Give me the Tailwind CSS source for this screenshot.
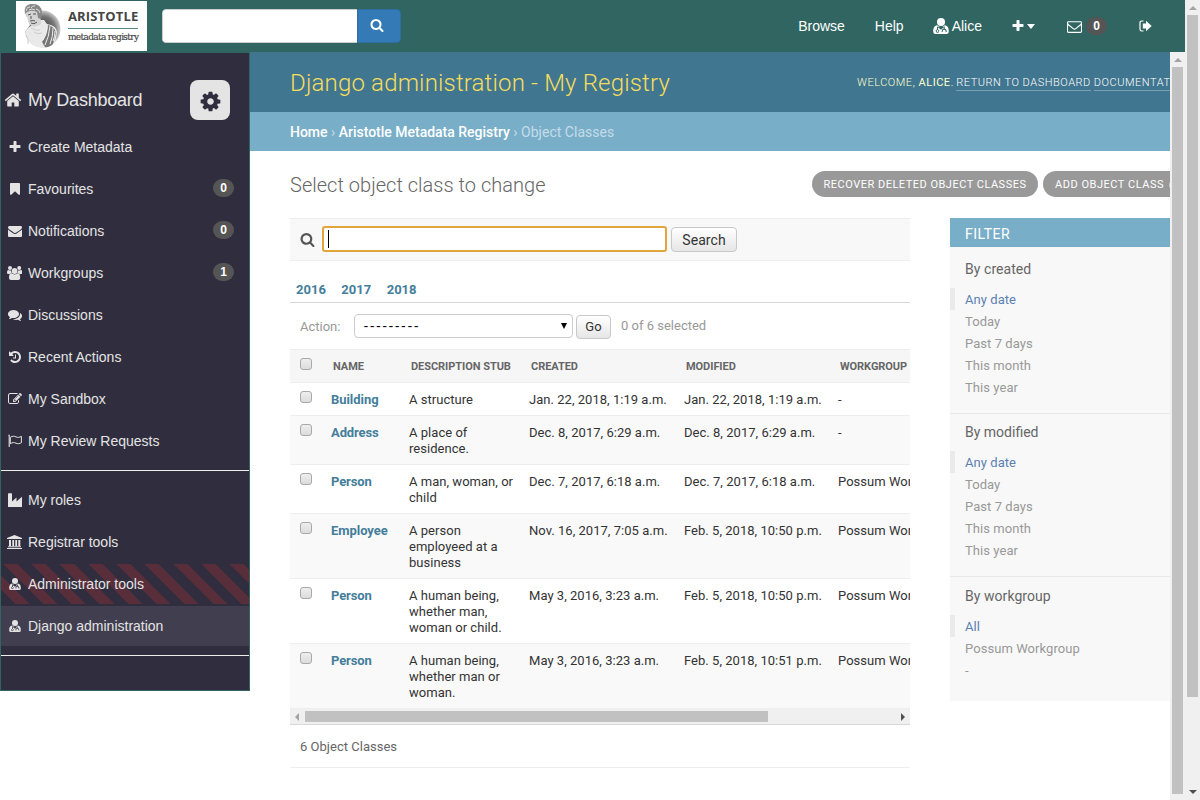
<!DOCTYPE html>
<html lang="en">
<head>
<meta charset="utf-8">
<title>Select object class to change</title>
<script src="https://cdn.jsdelivr.net/npm/@tailwindcss/browser@4"></script>
</head>
<body class="h-[800px] w-[1200px] overflow-hidden bg-white font-['Liberation_Sans',Arial,sans-serif] text-sm">
<svg class="hidden">
  <symbol id="plus" viewBox="0 0 1792 1792"><path d="M1600 736v192q0 40-28 68t-68 28h-416v416q0 40-28 68t-68 28h-192q-40 0-68-28t-28-68v-416h-416q-40 0-68-28t-28-68v-192q0-40 28-68t68-28h416v-416q0-40 28-68t68-28h192q40 0 68 28t28 68v416h416q40 0 68 28t28 68z"/></symbol>
  <symbol id="bookmark" viewBox="0 0 1792 1792"><path d="M1420 128q23 0 44 9 33 13 52.500 41t19.500 62v1289q0 34-19.500 62t-52.500 41q-19 8-44 8-48 0-83-32l-441-424-441 424q-36 33-83 33-23 0-44-9-33-13-52.500-41t-19.500-62v-1289q0-34 19.500-62t52.500-41q21-9 44-9h1048z"/></symbol>
  <symbol id="envelope" viewBox="0 0 1792 1792"><path d="M1792 710v794q0 66-47 113t-113 47h-1472q-66 0-113-47t-47-113v-794q44 49 101 87 362 246 497 345 57 42 92.500 65.500t94.500 48 110 24.500h2q51 0 110-24.500t94.500-48 92.500-65.500q170-123 498-345 57-39 100-87zm0-294q0 79-49 151t-122 123q-376 261-468 325-10 7-42.500 30.500t-54 38-52 32.500-57.500 27-50 9h-2q-23 0-50-9t-57.500-27-52-32.500-54-38-42.500-30.500q-91-64-262-182.500t-205-142.500q-62-42-117-115.500t-55-136.500q0-78 41.500-130t118.500-52h1472q65 0 112.500 47t47.500 113z"/></symbol>
  <symbol id="envelope-o" viewBox="0 0 1792 1792"><path d="M1664 1504v-768q-32 36-69 66-268 206-426 338-51 43-83 67t-86.500 48.500-102.500 24.500h-2q-48 0-102.500-24.500t-86.500-48.500-83-67q-158-132-426-338-37-30-69-66v768q0 13 9.500 22.500t22.500 9.500h1472q13 0 22.500-9.500t9.500-22.500zm0-1051v-24.500l-.5-13-3-12.500-5.500-9-9-7.500-14-2.500h-1472q-13 0-22.500 9.500t-9.500 22.500q0 168 147 284 193 152 401 317 6 5 35 29.500t46 37.500 44.500 31.500 50.500 27.500 43 9h2q20 0 43-9t50.500-27.500 44.500-31.500 46-37.500 35-29.500q208-165 401-317 54-43 100.500-115.500t46.500-131.500zm128-37v1088q0 66-47 113t-113 47h-1472q-66 0-113-47t-47-113v-1088q0-66 47-113t113-47h1472q66 0 113 47t47 113z"/></symbol>
  <symbol id="cog" viewBox="0 0 1792 1792"><path d="M1152 896q0-106-75-181t-181-75-181 75-75 181 75 181 181 75 181-75 75-181zm512-109v222q0 12-8 23t-20 13l-185 28q-19 54-39 91 35 50 107 138 10 12 10 25t-9 23q-27 37-99 108t-94 71q-12 0-26-9l-138-108q-44 23-91 38-16 136-29 186-7 28-36 28h-222q-14 0-24.500-8.500t-11.500-21.500l-28-184q-49-16-90-37l-141 107q-10 9-25 9-14 0-25-11-126-114-165-168-7-10-7-23 0-12 8-23 15-21 51-66.500t54-70.500q-27-50-41-99l-183-27q-13-2-21-12.500t-8-23.500v-222q0-12 8-23t19-13l186-28q14-46 39-92-40-57-107-138-10-12-10-24 0-10 9-23 26-36 98.500-107.500t94.500-71.500q13 0 26 10l138 107q44-23 91-38 16-136 29-186 7-28 36-28h222q14 0 24.500 8.500t11.500 21.500l28 184q49 16 90 37l142-107q9-9 24-9 13 0 25 10 129 119 165 170 7 8 7 22 0 12-8 23-15 21-51 66.500t-54 70.500q26 50 41 98l183 28q13 2 21 12.500t8 23.500z"/></symbol>
  <symbol id="home" viewBox="0 0 1792 1792"><path d="M1472 992v480q0 26-19 45t-45 19h-384v-384h-256v384h-384q-26 0-45-19t-19-45v-480q0-1 .5-3t.5-3l575-474 575 474q1 2 1 6zm223-69l-62 74q-8 9-21 11h-3q-13 0-21-7l-692-577-692 577q-12 8-24 7-13-2-21-11l-62-74q-8-10-7-23.500t11-21.500l719-599q32-26 76-26t76 26l244 204v-195q0-14 9-23t23-9h192q14 0 23 9t9 23v408l219 182q10 8 11 21.500t-7 23.500z"/></symbol>
  <symbol id="search" viewBox="0 0 1792 1792"><path d="M1216 832q0-185-131.500-316.500t-316.500-131.500-316.500 131.500-131.500 316.500 131.500 316.500 316.500 131.500 316.500-131.500 131.500-316.500zm512 832q0 52-38 90t-90 38q-54 0-90-38l-343-342q-179 124-399 124-143 0-273.500-55.500t-225-150-150-225-55.500-273.500 55.500-273.500 150-225 225-150 273.500-55.500 273.500 55.500 225 150 150 225 55.500 273.500q0 220-124 399l343 343q37 37 37 90z"/></symbol>
  <symbol id="history" viewBox="0 0 1792 1792"><path d="M1664 896q0 156-61 298t-164 245-245 164-298 61q-172 0-327-72.500t-264-204.500q-7-10-6.500-22.500t8.500-20.500l137-138q10-9 25-9 16 2 23 12 73 95 179 147t225 52q104 0 198.500-40.500t163.500-109.500 109.500-163.500 40.500-198.500-40.500-198.500-109.500-163.500-163.500-109.500-198.500-40.500q-98 0-188 35.500t-160 101.500l137 138q31 30 14 69-17 40-59 40h-448q-26 0-45-19t-19-45v-448q0-42 40-59 39-17 69 14l130 129q107-101 244.500-156.500t284.500-55.500q156 0 298 61t245 164 164 245 61 298zm-640-288v448q0 14-9 23t-23 9h-320q-14 0-23-9t-9-23v-64q0-14 9-23t23-9h224v-352q0-14 9-23t23-9h64q14 0 23 9t9 23z"/></symbol>
  <symbol id="comments" viewBox="0 0 1792 1792"><path d="M1408 768q0 139-94 257t-256.500 186.500-353.500 68.500q-86 0-176-16-124 88-278 128-36 9-86 16h-3q-11 0-20.500-8t-11.500-21q-1-3 2-19l10-16q30-32 53-58t48-68 20-44q-124-72-195-177t-71-224q0-139 94-257t256.500-186.500 353.500-68.500 353.500 68.500 256.500 186.500 94 257zm384 256q0 120-71 224.500t-195 176.500q10 24 20.500 44t25 38.500 22.500 29 26 29.500 23 25l16 20 5 17q-3 30-36 35-50-7-86-16-154-40-278-128-90 16-176 16-271 0-472-132 58 4 88 4 161 0 309-45t264-129q125-92 192-212t67-254q0-77-23-152 129 71 204 178t75 230z"/></symbol>
  <symbol id="edit" viewBox="0 0 1792 1792"><path d="M888 1184l116-116-152-152-116 116v56h96v96h56zm440-720q-16-16-33 1l-350 350q-17 17-1 33t33-1l350-350q17-17 1-33zm80 594v190q0 119-84.500 203.500t-203.500 84.500h-832q-119 0-203.500-84.500t-84.500-203.500v-832q0-119 84.500-203.500t203.500-84.500h832q63 0 117 25 15 7 18 23 3 17-9 29l-49 49q-14 14-32 8-23-6-45-6h-832q-66 0-113 47t-47 113v832q0 66 47 113t113 47h832q66 0 113-47t47-113v-126q0-13 9-22l64-64q15-15 35-7t20 29zm-96-738l288 288-672 672h-288v-288zm444 132l-92 92-288-288 92-92q28-28 68-28t68 28l152 152q28 28 28 68t-28 68z"/></symbol>
  <symbol id="flag" viewBox="0 0 14 14"><path d="M.3 1.200h1.400M1.200 1v12" fill="none" stroke="currentColor" stroke-width="1.100"/><path d="M2.300 3.300C4.500 2 6 1.900 8 2.900c2 .9 3.300.5 5.400-.5v6.300c-2 1-3.400 1.400-5.400.5-2-1-3.500-.8-5.700.5z" fill="none" stroke="currentColor"/></symbol>
  <symbol id="industry" viewBox="0 0 14 14"><path d="M0 14V1q0-.8.800-.8h2.500q.7 0 .7.800v7.500l4.500-4v4l5.500-4.800V14z"/></symbol>
  <symbol id="bank" viewBox="0 0 15 14"><path d="M7.500 0L15 3v1H0V3zM2 5h2v6H2zm3.300 0h1.800v6H5.300zm3 0h1.800v6H8.300zM11.300 5h2v6h-2zM1 11.300h13v1H1zM0 13h15v1H0z"/></symbol>
  <symbol id="users" viewBox="0 0 15 14"><circle cx="3" cy="2" r="2"/><circle cx="12.200" cy="2" r="2"/><circle cx="7.600" cy="5" r="2.900"/><path d="M0 7.300C0 4.600.5 4 1.300 4 2 4.500 3 4.700 4 4.300 4 5.400 4.200 6.200 4.900 7 3.800 7 3.300 7.300 2.800 8H1.500Q0 8 0 7.300zM15.200 7.300C15.200 4.600 14.700 4 13.900 4c-.7.500-1.700.7-2.700.3 0 1.100-.2 1.900-.9 2.700 1.100 0 1.600.3 2.100 1h1.300q1.500 0 1.500-.7zM2 12c0-3.300.8-4.700 2.700-4.700 1.800 1.500 4 1.500 5.800 0 1.900 0 2.700 1.400 2.700 4.700q0 2-2 2H4q-2 0-2-2z"/></symbol>
  <symbol id="doctor" viewBox="0 0 16 16"><circle cx="8" cy="4" r="4"/><path fill-rule="evenodd" d="M4.200 7.300q3.800 3 7.600 0c3 .4 4 3 4 6.200q0 2.500-2.400 2.500H2.600Q.2 16 .2 13.500c0-3.200 1-5.800 4-6.200zM4 8.800v2.700a1.600 1.600 0 1 0 1 0V9.200l3 2.600 2.700-2.500v1.500c-1.500.3-2 1-2 3.200h1c0-1.500.3-2.200 1.500-2.200s1.500.7 1.500 2.200h1c0-2.200-.5-2.900-2-3.200V8.600zM3.800 13a.8.8 0 1 1 1.500 0 .8.800 0 1 1-1.500 0z"/></symbol>
  <symbol id="signout" viewBox="0 0 13 12"><path d="M4.500 1H2.700Q1 1 1 2.700v6.600Q1 11 2.700 11h1.800" fill="none" stroke="currentColor" stroke-width="1.200"/><path d="M7 .8L12.700 6 7 11.200V8.500H3.800v-5H7z"/></symbol>
</svg>

<div class="flex h-full">
<div class="flex w-[1185px] flex-col">
  <header class="flex h-[52px] shrink-0 items-center bg-[#306561] text-white">
    <div class="ml-4 flex h-[50px] w-[131px] items-center bg-white">
      <svg class="ml-1.5 h-[46px] w-10" viewBox="0 0 40 46">
        <defs><radialGradient id="halo"><stop offset="0" stop-color="#333"/><stop offset=".7" stop-color="#777"/><stop offset="1" stop-color="#ccc"/></radialGradient></defs>
        <ellipse cx="20.500" cy="26" rx="18" ry="18.500" fill="url(#halo)"/>
        <path d="M0 0h7l-3 12 4 10-6 8H0z" fill="#fff"/>
        <path d="M3 31q1-7 9-9l1-5 9 0 3 4q9 1 10 8l-2 11q-5 5-13 5-8-1-12-5z" fill="#e9e9e9"/>
        <path d="M26 22q7 2 8 8l-3 11q-5 4-8 3l-3-5q6-8 6-17z" fill="#777"/>
        <path d="M28 23q-1 11-5 19M31 25q0 9-3 16M33 28q0 6-2 10M25 24q-1 8-4 13" fill="none" stroke="#eee" stroke-width="1"/>
        <path d="M4 32q3 5 2 9M9 25q5 3 9 2M12 29q4 3 8 1" fill="none" stroke="#ccc"/>
        <path d="M3 9Q4 1 11 1q8 0 8 8l-1 5q2 6 0 8l-6 2q-6-2-6-8Q3 13 3 9z" fill="#d4d4d4"/>
        <path d="M3 11Q1 2 9 1q10-1 11 8l-1 7-3-1-1-6q-5-2-7-1l-3 1z" fill="#888"/>
        <path d="M4 8q1-5 4-4M9 5q1-3 4-2M14 6q3 0 4 4M7 7q3-2 6 0" fill="none" stroke="#ddd"/>
        <path d="M6 12l3-1M11 11l3 0M9 13l0 3M8 18q3-1 5 0M9 20q3 2 6-1" fill="none" stroke="#444" stroke-width=".9"/>
      </svg>
      <div class="ml-1.5 flex w-[70px] flex-col whitespace-nowrap text-[#444]">
        <div class="font-['Open_Sans',sans-serif] text-[13px] leading-[15px] font-bold tracking-[0.15px]">ARISTOTLE</div>
        <div class="mt-1 h-px bg-[#528b83]"></div>
        <div class="mt-[2px] font-['DejaVu_Serif',serif] text-[9px] leading-3 tracking-[-0.67px] [-webkit-text-stroke:0.2px_#444]">metadata registry</div>
      </div>
    </div>
    <div class="ml-[15px] flex h-[34px] w-[239px] overflow-hidden rounded">
      <div class="w-[195px] rounded-l border border-r-0 border-[#ccc] bg-white"></div>
      <div class="grid flex-1 place-items-center rounded-r border border-[#2e6da4] bg-[#337ab7]"><svg class="mr-[5px] mb-[3px] size-3.5 fill-white"><use href="#search"/></svg></div>
    </div>
    <nav class="ml-auto flex items-center pr-[33px] text-sm">
      <span>Browse</span><span class="ml-[30px]">Help</span>
      <svg class="ml-[29.5px] size-4 fill-white"><use href="#doctor"/></svg><span class="ml-[2.5px]">Alice</span>
      <svg class="ml-[29px] size-3.5 fill-white"><use href="#plus"/></svg>
      <span class="ml-[2px] h-0 w-0 border-x-[4.5px] border-t-[5px] border-x-transparent border-t-white"></span>
      <svg class="ml-8 size-[15px] fill-white"><use href="#envelope-o"/></svg>
      <span class="ml-1 grid h-[18px] w-[21px] place-items-center rounded-full bg-[#555] text-xs font-bold">0</span>
      <svg class="ml-8 h-3 w-[13px] fill-white"><use href="#signout"/></svg>
    </nav>
  </header>

  <div class="flex min-h-0 flex-1">
    <aside class="flex h-[639px] w-[250px] shrink-0 flex-col border border-[#306561] bg-[#302e3e] text-[#e4e4e4]">
      <div class="mt-[27px] flex h-10 items-center text-lg">
        <svg class="ml-[3px] size-[18px] fill-current"><use href="#home"/></svg><span class="ml-1.5 tracking-[-0.22px]">My Dashboard</span>
        <span class="mr-[19px] ml-auto grid size-10 place-items-center rounded-lg bg-[#e4e4e4] text-[#302e3e]"><svg class="mt-0.5 size-[23px] fill-current"><use href="#cog"/></svg></span>
      </div>
      <div class="mt-[7px] flex flex-col gap-0.5">
        <div class="flex h-10 items-center pl-1.5"><svg class="mr-[7px] ml-px size-3.5 fill-current"><use href="#plus"/></svg><span class="-ml-px">Create Metadata</span></div>
        <div class="flex h-10 items-center pl-[7px]"><svg class="mr-1.5 size-3.5 fill-current"><use href="#bookmark"/></svg>Favourites<span class="mr-[15px] mb-0.5 ml-auto grid h-[18px] w-[21px] place-items-center rounded-full bg-[#555] text-xs font-bold text-white">0</span></div>
        <div class="flex h-10 items-center pl-[7px]"><svg class="mr-1.5 size-3.5 fill-current"><use href="#envelope"/></svg>Notifications<span class="mr-[15px] mb-0.5 ml-auto grid h-[18px] w-[21px] place-items-center rounded-full bg-[#555] text-xs font-bold text-white">0</span></div>
        <div class="flex h-10 items-center pl-1.5"><svg class="mr-1.5 h-3.5 w-[15px] fill-current"><use href="#users"/></svg>Workgroups<span class="mr-[15px] mb-0.5 ml-auto grid h-[18px] w-[21px] place-items-center rounded-full bg-[#555] text-xs font-bold text-white">1</span></div>
        <div class="flex h-10 items-center pl-[7px]"><svg class="mr-1.5 size-3.5 fill-current"><use href="#comments"/></svg>Discussions</div>
        <div class="flex h-10 items-center pl-[7px]"><svg class="mr-1.5 size-3.5 fill-current"><use href="#history"/></svg>Recent Actions</div>
        <div class="flex h-10 items-center pl-[7px]"><svg class="mr-1.5 size-3.5 fill-current"><use href="#edit"/></svg>My Sandbox</div>
        <div class="flex h-10 items-center pl-[7px]"><svg class="mr-1.5 size-3.5 fill-current"><use href="#flag"/></svg>My Review Requests</div>
      </div>
      <div class="my-[9px] h-px shrink-0 bg-[#eee]"></div>
      <div class="flex flex-col gap-0.5">
        <div class="flex h-10 items-center pl-[7px]"><svg class="mr-1.5 size-3.5 fill-current"><use href="#industry"/></svg>My roles</div>
        <div class="flex h-10 items-center pl-1.5"><svg class="mr-1.5 h-3.5 w-[15px] fill-current"><use href="#bank"/></svg>Registrar tools</div>
        <div class="flex h-10 items-center bg-[repeating-linear-gradient(45deg,#302e3e_0_10px,#582e3b_10px_20px)] pl-2"><svg class="mr-[7px] size-3 fill-current"><use href="#doctor"/></svg>Administrator tools</div>
        <div class="flex h-10 items-center bg-[#413f4f] pl-2"><svg class="mr-[7px] size-3 fill-current"><use href="#doctor"/></svg>Django administration</div>
      </div>
      <div class="mt-[9px] h-px shrink-0 bg-[#eee]"></div>
    </aside>

    <main class="flex w-[920px] shrink-0 flex-col overflow-hidden font-[Roboto,sans-serif] text-[13px] text-[#333]">
      <div class="flex h-[60px] shrink-0 items-center bg-[#417690] pt-px pl-10 whitespace-nowrap">
        <h1 class="w-[567px] shrink-0 text-2xl font-light tracking-[0.17px] text-[#f5dd5d]">Django administration - My Registry</h1>
        <div class="flex shrink-0 pt-px text-[11px] leading-[14px] font-light tracking-[0.53px] text-[#ffc]"><span>WELCOME, <b>ALICE</b>.</span><span class="ml-[2.5px] border-b border-white/30 text-white">RETURN TO DASHBOARD</span><span class="ml-[3px] border-b border-white/30 text-white">DOCUMENTATION</span></div>
      </div>
      <div class="flex h-[39px] shrink-0 items-center gap-[3.5px] bg-[#79aec8] pl-10 text-sm whitespace-nowrap text-[#c4dce8]"><span class="font-medium tracking-[-0.02px] text-white">Home</span><span>›</span><span class="font-medium tracking-[-0.01px] text-white">Aristotle Metadata Registry</span><span>›</span><span class="tracking-[0.03px]">Object Classes</span></div>
      <div class="flex h-[67px] shrink-0 items-center pl-10 whitespace-nowrap">
        <h2 class="w-[522px] shrink-0 text-xl font-light tracking-[0.02px] text-[#666]">Select object class to change</h2>
        <span class="mr-[5px] mb-0.5 grid h-[26px] w-[226px] shrink-0 place-items-center rounded-full bg-[#999] pt-0.5 text-[11px] leading-4 tracking-[0.5px] text-white">RECOVER DELETED OBJECT CLASSES</span>
        <span class="mb-0.5 flex h-[26px] w-[150px] shrink-0 items-center gap-[5px] rounded-full bg-[#999] pt-0.5 pl-3 text-[11px] leading-4 tracking-[0.53px] text-white">ADD OBJECT CLASS <i class="size-3 rounded-full bg-[#ccc]"></i></span>
      </div>
      <div class="flex pl-10">
        <section class="flex w-[620px] shrink-0 flex-col">
          <div class="flex h-[43px] items-center border-y border-[#eee] bg-[#f8f8f8] pl-2.5">
            <svg class="mr-[7px] size-[15px] fill-[#555]"><use href="#search"/></svg>
            <div class="mb-px flex h-[26px] w-[345px] items-center rounded-[3px] border-2 border-[#e0a53d] bg-white pl-1"><i class="h-[18px] w-px bg-black"></i></div>
            <span class="mb-px ml-1 grid h-[25px] w-[66px] place-items-center rounded border border-[#c8c8c8] bg-linear-to-b from-white to-[#e6e6e6] pt-px text-sm leading-5 tracking-[0.05px]">Search</span>
          </div>
          <div class="flex h-[42px] items-end gap-[15.5px] border-b border-[#d8d8d8] pb-[2px] pl-1.5 leading-5 font-bold text-[#447e9b]"><span>2016</span><span>2017</span><span>2018</span></div>
          <div class="flex h-[46px] items-center pl-2.5 text-[#999]">
            <span class="w-[54px] pt-0.5">Action:</span>
            <div class="flex h-6 w-[219px] items-center justify-between rounded border border-[#ccc] bg-white pr-[5px] pl-[9px] text-sm tracking-[2.4px] text-black"><span>---------</span><i class="h-0 w-0 border-x-[3px] border-t-[6px] border-x-transparent border-t-black"></i></div>
            <span class="mt-0.5 mr-2.5 ml-[3px] grid h-6 w-[35px] place-items-center rounded border border-[#c8c8c8] bg-linear-to-b from-white to-[#e6e6e6] text-[#333]">Go</span>
            <span>0 of 6 selected</span>
          </div>
          <div class="overflow-hidden leading-4 tracking-[0.03px]">
            <div class="grid w-[760px] grid-cols-[33px_78px_120px_155px_154px_1fr] border-y border-[#eee] bg-[#f6f6f6] pt-[9px] pb-[7px] text-[11px] font-bold tracking-[-0.05px] text-[#666]">
              <i class="-mt-px ml-2.5 size-3 rounded-[3px] border border-[#a9a9a9] bg-linear-to-b from-[#eee] to-[#dcdcdc]"></i><span class="pl-2.5">NAME</span><span class="pl-2.5">DESCRIPTION STUB</span><span class="pl-2.5">CREATED</span><span class="pl-2.5">MODIFIED</span><span class="pl-2.5">WORKGROUP</span>
            </div>
            <div class="grid w-[760px] grid-cols-[33px_78px_120px_155px_154px_1fr] border-b border-[#eee] pt-[9px] pb-[7px]">
              <i class="-mt-px ml-2.5 size-3 rounded-[3px] border border-[#a9a9a9] bg-linear-to-b from-[#eee] to-[#dcdcdc]"></i><b class="pl-2 tracking-[-0.05px] text-[#447e9b]">Building</b><span class="px-2">A structure</span><span class="pl-2">Jan. 22, 2018, 1:19 a.m.</span><span class="pl-2">Jan. 22, 2018, 1:19 a.m.</span><span class="pl-2">-</span>
            </div>
            <div class="grid w-[760px] grid-cols-[33px_78px_120px_155px_154px_1fr] border-b border-[#eee] bg-[#f9f9f9] pt-[9px] pb-[7px]">
              <i class="-mt-px ml-2.5 size-3 rounded-[3px] border border-[#a9a9a9] bg-linear-to-b from-[#eee] to-[#dcdcdc]"></i><b class="pl-2 tracking-[-0.1px] text-[#447e9b]">Address</b><span class="px-2">A place of<br>residence.</span><span class="pl-2">Dec. 8, 2017, 6:29 a.m.</span><span class="pl-2">Dec. 8, 2017, 6:29 a.m.</span><span class="pl-2">-</span>
            </div>
            <div class="grid w-[760px] grid-cols-[33px_78px_120px_155px_154px_1fr] border-b border-[#eee] pt-[9px] pb-[7px]">
              <i class="-mt-px ml-2.5 size-3 rounded-[3px] border border-[#a9a9a9] bg-linear-to-b from-[#eee] to-[#dcdcdc]"></i><b class="pl-2 tracking-[-0.1px] text-[#447e9b]">Person</b><span class="pl-2">A man, woman, or<br>child</span><span class="pl-2">Dec. 7, 2017, 6:18 a.m.</span><span class="pl-2">Dec. 7, 2017, 6:18 a.m.</span><span class="pl-2">Possum Workgroup</span>
            </div>
            <div class="grid w-[760px] grid-cols-[33px_78px_120px_155px_154px_1fr] border-b border-[#eee] bg-[#f9f9f9] pt-[9px] pb-[7px]">
              <i class="-mt-px ml-2.5 size-3 rounded-[3px] border border-[#a9a9a9] bg-linear-to-b from-[#eee] to-[#dcdcdc]"></i><b class="pl-2 tracking-[-0.05px] text-[#447e9b]">Employee</b><span class="pl-2">A person<br>employeed at a<br>business</span><span class="pl-2">Nov. 16, 2017, 7:05 a.m.</span><span class="pl-2">Feb. 5, 2018, 10:50 p.m.</span><span class="pl-2">Possum Workgroup</span>
            </div>
            <div class="grid w-[760px] grid-cols-[33px_78px_120px_155px_154px_1fr] border-b border-[#eee] pt-[9px] pb-[7px]">
              <i class="-mt-px ml-2.5 size-3 rounded-[3px] border border-[#a9a9a9] bg-linear-to-b from-[#eee] to-[#dcdcdc]"></i><b class="pl-2 tracking-[-0.1px] text-[#447e9b]">Person</b><span class="pl-2">A human being,<br>whether man,<br>woman or child.</span><span class="pl-2">May 3, 2016, 3:23 a.m.</span><span class="pl-2">Feb. 5, 2018, 10:50 p.m.</span><span class="pl-2">Possum Workgroup</span>
            </div>
            <div class="grid w-[760px] grid-cols-[33px_78px_120px_155px_154px_1fr] border-b border-[#eee] bg-[#f9f9f9] pt-[9px] pb-[7px]">
              <i class="-mt-px ml-2.5 size-3 rounded-[3px] border border-[#a9a9a9] bg-linear-to-b from-[#eee] to-[#dcdcdc]"></i><b class="pl-2 tracking-[-0.1px] text-[#447e9b]">Person</b><span class="pl-2">A human being,<br>whether man or<br>woman.</span><span class="pl-2">May 3, 2016, 3:23 a.m.</span><span class="pl-2">Feb. 5, 2018, 10:51 p.m.</span><span class="pl-2">Possum Workgroup</span>
            </div>
          </div>
          <div class="flex h-4 items-center border-b border-[#d8d8d8] bg-[#f0f0f0] pl-[5px]">
            <i class="h-0 w-0 border-y-4 border-r-4 border-y-transparent border-r-[#a3a3a3]"></i>
            <i class="ml-1.5 h-[11px] w-[463px] bg-[#c1c1c1]"></i>
            <i class="mr-[5px] ml-auto h-0 w-0 border-y-4 border-l-4 border-y-transparent border-l-[#505050]"></i>
          </div>
          <div class="flex h-[43px] items-center border-b border-[#eee] pt-0.5 pl-2.5 tracking-[0.02px] text-[#666]">6 Object Classes</div>
        </section>

        <section class="ml-10 h-[483px] w-[240px] shrink-0 bg-[#f8f8f8] text-[#999]">
          <h3 class="flex h-[29px] items-center bg-[#79aec8] pt-0.5 pl-[15px] text-sm tracking-[0.5px] text-white">FILTER</h3>
          <div class="h-[167px] border-b border-[#e8e8e8] pt-3 leading-[22px] tracking-[0.06px]">
            <div class="mb-[9px] pl-[15px] text-sm leading-5 text-[#666]">By created</div>
            <div class="h-[22px] border-l-[5px] border-[#eaeaea] pt-px pl-2.5 text-[#5b80b2]">Any date</div>
            <div class="pt-px pl-[15px]">Today<br>Past 7 days<br>This month<br>This year</div>
          </div>
          <div class="h-[163px] border-b border-[#e8e8e8] pt-2 leading-[22px] tracking-[0.06px]">
            <div class="mb-[9px] pl-[15px] text-sm leading-5 tracking-normal text-[#666]">By modified</div>
            <div class="h-[22px] border-l-[5px] border-[#eaeaea] pt-px pl-2.5 text-[#5b80b2]">Any date</div>
            <div class="pt-px pl-[15px]">Today<br>Past 7 days<br>This month<br>This year</div>
          </div>
          <div class="pt-[9px] leading-[22px] tracking-[0.06px]">
            <div class="mb-[9px] pl-[15px] text-sm leading-5 text-[#666]">By workgroup</div>
            <div class="h-[22px] border-l-[5px] border-[#eaeaea] pt-px pl-2.5 text-[#5b80b2]">All</div>
            <div class="pt-px pl-[15px]">Possum Workgroup<br>-</div>
          </div>
        </section>
      </div>
    </main>
    <div class="flex w-[15px] flex-col items-center bg-[#f0f0f0]">
      <i class="mt-1.5 h-0 w-0 border-x-4 border-b-4 border-x-transparent border-b-[#a3a3a3]"></i>
      <i class="mt-[5px] h-[727px] w-[11px] bg-[#c1c1c1]"></i>
    </div>
  </div>
</div>
<div class="flex w-[15px] flex-col items-center bg-[#f0f0f0]">
  <i class="mt-1.5 h-0 w-0 border-x-4 border-b-4 border-x-transparent border-b-[#a3a3a3]"></i>
  <i class="mt-[5px] h-[682px] w-[11px] bg-[#c1c1c1]"></i>
  <i class="mt-auto mb-1.5 h-0 w-0 border-x-4 border-t-4 border-x-transparent border-t-[#505050]"></i>
</div>
</div>
</body>
</html>
